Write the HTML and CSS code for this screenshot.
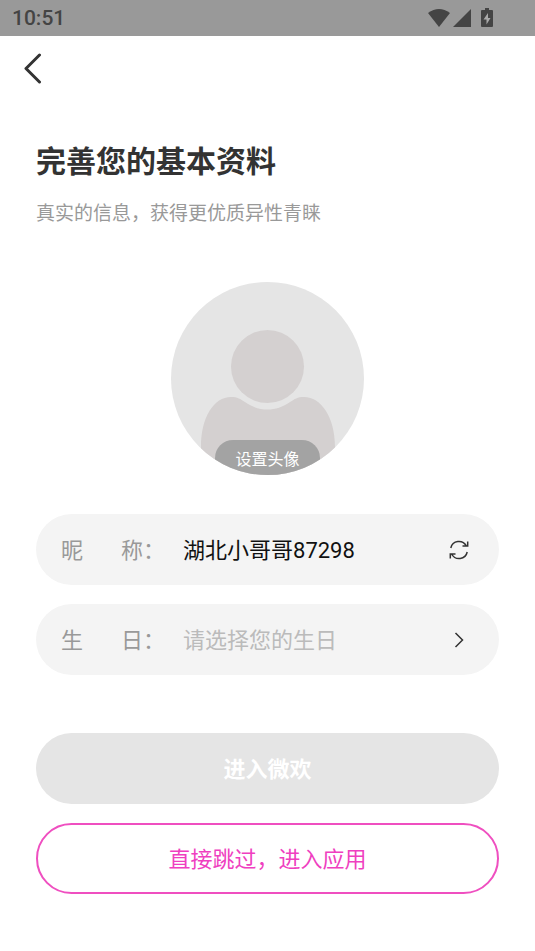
FILE: index.html
```html
<!DOCTYPE html>
<html lang="zh-CN">
<head>
<meta charset="utf-8">
<meta name="viewport" content="width=device-width, initial-scale=1">
<title>完善您的基本资料</title>
<link rel="stylesheet" href="styles.css">
</head>
<body>
<div class="status-bar">
  <time class="clock">10:51</time>
  <div class="status-icons">
    <svg width="24" height="20" viewBox="0 0 24 20" aria-hidden="true"><path d="M1 5Q12-3 23 5L12 19Z"/></svg>
    <svg width="18" height="18" viewBox="0 0 18 18" aria-hidden="true"><path d="M18 0V18H0Z"/></svg>
    <svg class="battery" width="12" height="20" viewBox="0 0 12 20" aria-hidden="true"><path d="M4 0H8V2H11Q12 2 12 3V18Q12 19 11 19H1Q0 19 0 18V3Q0 2 1 2H4Z"/><path class="bolt" d="M7 5L2.5 11.500H5.5V16.500L9.5 10H7Z"/></svg>
  </div>
</div>
<header class="nav">
  <button class="icon-button" type="button" aria-label="返回">
    <svg width="20" height="32" viewBox="0 0 20 32"><path class="back-line" d="M16.500 3L3 16.500L16.500 30"/></svg>
  </button>
</header>
<main class="page">
  <h1 class="title">完善您的基本资料</h1>
  <p class="subtitle">真实的信息，获得更优质异性青睐</p>
  <button class="avatar" type="button">
    <svg class="person" viewBox="0 0 193 193" aria-hidden="true">
      <circle cx="96.500" cy="84.500" r="36.500"/>
      <path d="M30 193V165C30 135 43 115 60 115C67 115 69 117 74 120C88 130 105 130 119 120C124 117 126 115 133 115C150 115 164 135 164 165V193Z"/>
    </svg>
    <span class="avatar-label">设置头像</span>
  </button>
  <form class="form">
    <div class="field">
      <label class="label" for="nickname"><span>昵</span><span>称：</span></label>
      <input class="input nickname" id="nickname" type="text" value="湖北小哥哥87298">
      <button class="icon-button" type="button" aria-label="换一个昵称">
        <svg width="20" height="20" viewBox="0 0 20 20"><path class="line" d="M1.800 8C3.500 .3 13.500-1 17.500 6M18.700 1.500V6H13.500M18.200 12C16.500 19.700 6.500 21 2.500 14M1.300 18.500V14H6.500"/></svg>
      </button>
    </div>
    <div class="field">
      <label class="label" for="birthday"><span>生</span><span>日：</span></label>
      <input class="input" id="birthday" type="text" placeholder="请选择您的生日" readonly>
      <button class="icon-button" type="button" aria-label="选择生日">
        <svg width="20" height="20" viewBox="0 0 20 20"><path class="line" d="M6.500 3L13.500 10L6.500 17"/></svg>
      </button>
    </div>
    <div class="actions">
      <button class="button submit" type="submit" disabled>进入微欢</button>
      <button class="button skip" type="button">直接跳过，进入应用</button>
    </div>
  </form>
</main>
</body>
</html>
```
FILE: styles.css
```css
* {
  box-sizing: border-box;
}

body {
  margin: 0;
  background: #fff;
  color: #333;
  font-family: "Noto Sans CJK SC", sans-serif;
}

button,
input {
  margin: 0;
  padding: 0;
  border: 0;
  background: none;
  font: inherit;
}

svg {
  display: block;
}

.status-bar {
  display: flex;
  align-items: center;
  justify-content: space-between;
  height: 36px;
  padding: 0 42px 0 12px;
  background: #999;
  color: #444;
}

.clock {
  font-family: Roboto, sans-serif;
  font-size: 21px;
  font-weight: 500;
  line-height: 38px;
}

.status-icons {
  display: flex;
  align-items: center;
  gap: 2px;
  fill: #444;
}

.battery {
  margin-left: 8px;
}

.bolt {
  fill: #aaa;
}

.nav {
  display: flex;
  align-items: center;
  height: 64px;
  padding: 0 23px;
}

.icon-button {
  flex: none;
}

.back-line,
.line {
  fill: none;
  stroke: #333;
  stroke-width: 3;
  stroke-linecap: round;
  stroke-linejoin: round;
}

.line {
  stroke-width: 1.5;
  stroke-linecap: butt;
  stroke-linejoin: miter;
}

.page {
  padding: 38px 36px 56px;
}

.title {
  margin: 0 0 18px;
  font-size: 30px;
  font-weight: 700;
  line-height: 42px;
}

.subtitle {
  margin: 0;
  color: #999;
  font-size: 19px;
  line-height: 28px;
}

.avatar {
  display: block;
  position: relative;
  width: 193px;
  height: 193px;
  margin: 56px auto 39px;
  overflow: hidden;
  border-radius: 50%;
  background: #e5e5e5;
}

.person {
  width: 100%;
  fill: #d4d0d0;
}

.avatar-label {
  position: absolute;
  right: 44px;
  bottom: 0;
  left: 44px;
  height: 35px;
  border-radius: 18px 18px 0 0;
  background: #a3a3a3;
  color: #fff;
  font-size: 16px;
  line-height: 36px;
}

.form {
  display: flex;
  flex-direction: column;
  gap: 19px;
}

.field {
  display: flex;
  align-items: center;
  height: 71px;
  padding: 0 30px 0 25px;
  border-radius: 36px;
  background: #f4f4f4;
  font-size: 22px;
}

.label {
  display: flex;
  flex: none;
  gap: 38px;
  margin-right: 18px;
  padding-bottom: 4px;
  color: #999;
}

.input {
  flex: 1;
  min-width: 0;
  height: 44px;
  padding-bottom: 4px;
  outline: 0;
  color: #111;
}

.nickname {
  font-family: Roboto, "Noto Sans CJK SC", sans-serif;
}

.input::placeholder {
  color: #bbb;
  opacity: 1;
}

.actions {
  display: flex;
  flex-direction: column;
  gap: 19px;
  margin-top: 39px;
}

.button {
  height: 71px;
  padding-bottom: 4px;
  border-radius: 36px;
  font-size: 22px;
}

.submit {
  background: #e5e5e5;
  color: #fff;
  font-weight: 700;
}

.skip {
  border: 2px solid #ef4fc0;
  color: #ef3fc0;
}
```
